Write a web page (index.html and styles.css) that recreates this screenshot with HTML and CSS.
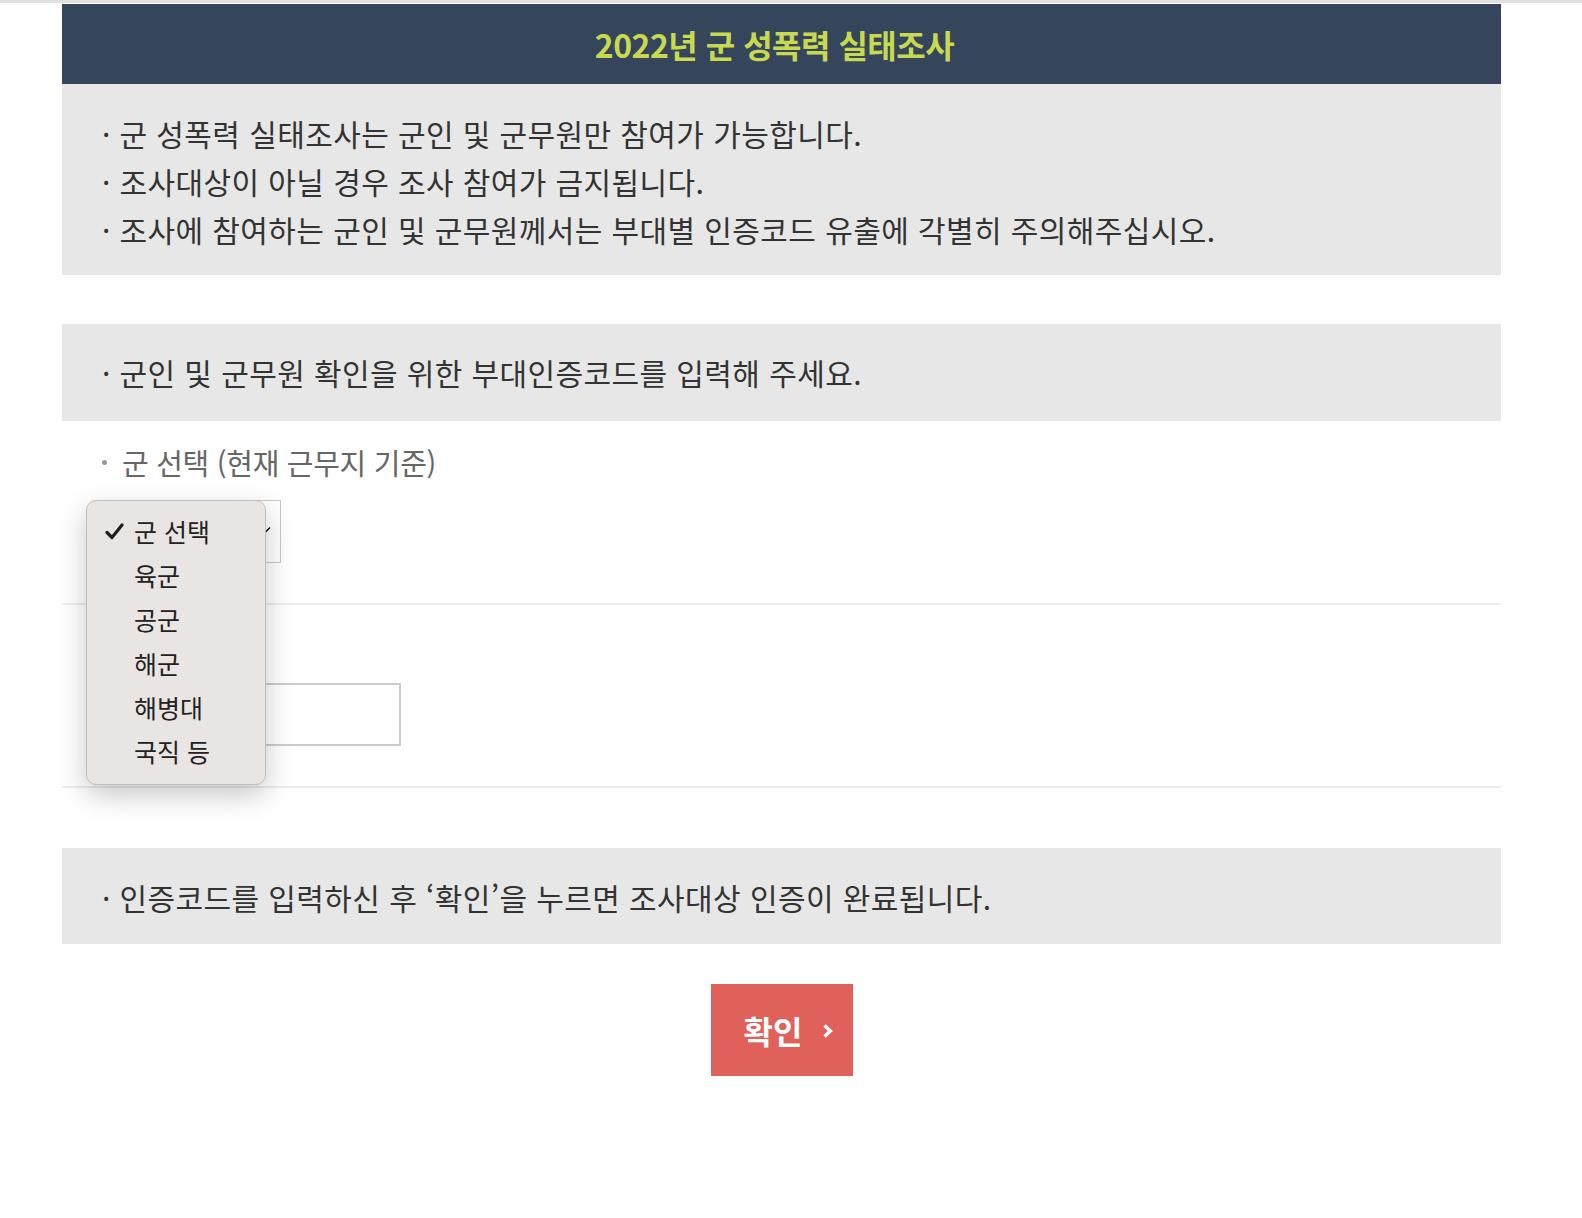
FILE: index.html
```html
<!DOCTYPE html>
<html lang="ko">
<head>
<meta charset="utf-8">
<title>2022년 군 성폭력 실태조사</title>
<link rel="stylesheet" href="styles.css">
</head>
<body>
<div class="topline"></div>
<main class="wrap">
  <h1 class="title">2022년 군 성폭력 실태조사</h1>

  <div class="notice notice-first">
    <p>· 군 성폭력 실태조사는 군인 및 군무원만 참여가 가능합니다.</p>
    <p>· 조사대상이 아닐 경우 조사 참여가 금지됩니다.</p>
    <p>· 조사에 참여하는 군인 및 군무원께서는 부대별 인증코드 유출에 각별히 주의해주십시오.</p>
  </div>

  <div class="notice notice-mid">
    <p>· 군인 및 군무원 확인을 위한 부대인증코드를 입력해 주세요.</p>
  </div>

  <section class="field field-army">
    <div class="label"><span class="dot"></span>군 선택 (현재 근무지 기준)</div>
    <div class="select-wrap">
      <div class="select">
        <svg class="chev" width="12" height="8" viewBox="0 0 12 8"><path d="M1 1.5 L6 6.5 L11 1.5" fill="none" stroke="#222" stroke-width="1.6"/></svg>
      </div>
      <ul class="dropdown">
        <li class="opt selected"><svg class="check" width="19" height="17" viewBox="0 0 19 17"><path d="M2 9.5 L7 14.5 L17 2" fill="none" stroke="#1f1f1f" stroke-width="3.2" stroke-linecap="round" stroke-linejoin="round"/></svg>군 선택</li>
        <li class="opt">육군</li>
        <li class="opt">공군</li>
        <li class="opt">해군</li>
        <li class="opt">해병대</li>
        <li class="opt">국직 등</li>
      </ul>
    </div>
  </section>

  <section class="field field-code">
    <div class="input"></div>
  </section>

  <div class="notice notice-last">
    <p>· 인증코드를 입력하신 후 ‘확인’을 누르면 조사대상 인증이 완료됩니다.</p>
  </div>

  <div class="actions">
    <button class="btn">확인<svg class="btn-chev" width="13" height="18" viewBox="0 0 13 18"><path d="M3.5 3.5 L9.5 9 L3.5 14.5" fill="none" stroke="#fff" stroke-width="3.4"/></svg></button>
  </div>
</main>
</body>
</html>
```

FILE: styles.css
```css
* { box-sizing: border-box; }

html, body {
  margin: 0;
  padding: 0;
  background: #ffffff;
}

body {
  font-family: "Noto Sans CJK KR", "Noto Sans", sans-serif;
  color: #333333;
}

.topline {
  height: 4px;
  border-top: 3px solid #e1e1e1;
}

.wrap {
  margin-left: 62px;
  width: 1439px;
}

.title {
  margin: 0;
  height: 80px;
  line-height: 80px;
  background: #34455c;
  color: #c9d94f;
  text-align: center;
  font-size: 32px;
  font-weight: 700;
  letter-spacing: -0.5px;
  padding-right: 14px;
}

.notice {
  background: #e7e7e7;
  padding: 0 40px;
}

.notice p {
  margin: 0;
  font-size: 30px;
  line-height: 48px;
  color: #333;
  letter-spacing: 0.4px;
}

.notice-first {
  padding-top: 25px;
  padding-bottom: 22px;
}

.notice-mid {
  margin-top: 49px;
  padding-top: 24px;
  padding-bottom: 25px;
}

.notice-last {
  margin-top: 60px;
  padding-top: 25px;
  padding-bottom: 23px;
}

.field {
  padding-left: 40px;
  border-bottom: 2px solid #ececec;
}

.field-army {
  padding-top: 21px;
  padding-bottom: 40px;
}

.label {
  display: flex;
  align-items: center;
  height: 40px;
  font-size: 29px;
  color: #666666;
  letter-spacing: -0.3px;
}

.dot {
  width: 5px;
  height: 5px;
  border-radius: 50%;
  background: #9a9a9a;
  margin-right: 15px;
}

.select-wrap {
  position: relative;
  margin-top: 18px;
  width: 179px;
}

.select {
  height: 63px;
  width: 179px;
  border: 1px solid #c8c8c8;
  background: #fff;
  display: flex;
  align-items: center;
  justify-content: flex-end;
  padding: 0 9px 0 16px;
}

.chev {
  margin-top: -4px;
}

.dropdown {
  position: absolute;
  left: -16px;
  top: 0;
  width: 180px;
  height: 285px;
  margin: 0;
  padding: 8px 0 0 0;
  list-style: none;
  background: #e9e5e3;
  border: 1px solid #c2bebc;
  border-radius: 10px;
  box-shadow: 0 10px 28px rgba(0, 0, 0, 0.22);
}

.opt {
  position: relative;
  height: 44px;
  line-height: 44px;
  padding-left: 47px;
  font-size: 25px;
  color: #222;
}

.check {
  position: absolute;
  left: 18px;
  top: 14px;
}

.field-code {
  padding-top: 78px;
  padding-bottom: 40px;
}

.input {
  width: 299px;
  height: 63px;
  border: 2px solid #cccccc;
  background: #fff;
}

.actions {
  display: flex;
  justify-content: center;
  margin-top: 40px;
}

.btn {
  width: 142px;
  height: 92px;
  border: none;
  background: #e0605a;
  color: #ffffff;
  font-family: "Noto Sans CJK KR", "Noto Sans", sans-serif;
  font-size: 32px;
  font-weight: 700;
  display: flex;
  align-items: center;
  justify-content: flex-start;
  gap: 19px;
  padding: 0 0 0 33px;
}

.btn-chev {
  margin-top: 2px;
}
```
